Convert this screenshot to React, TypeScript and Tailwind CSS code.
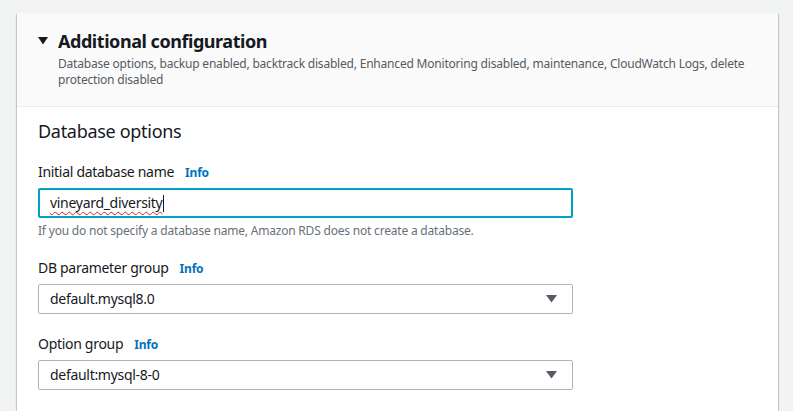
import React from "react";

const font = { fontFamily: '"Noto Sans", "Open Sans", Arial, sans-serif' };

const Caret = () => (
  <svg width="11" height="8" viewBox="0 0 11 8" className="fill-[#545b64]">
    <path d="M0 0h11L5.5 7.5z" />
  </svg>
);

const Label: React.FC<{ text: string }> = ({ text }) => (
  <div className="flex h-[20px] items-center gap-[11px] leading-[20px]">
    <span className="text-[14px] tracking-[-0.3px] text-[#16191f]">{text}</span>
    <span className="pt-[1px] text-[12px] font-bold tracking-[-0.2px] text-[#0073bb]">Info</span>
  </div>
);

const SelectBox: React.FC<{ value: string }> = ({ value }) => (
  <div className="mt-[6px] flex h-[30px] w-[535px] items-center justify-between rounded-[2px] border border-[#aab7b8] bg-white pl-[11px] pr-[15px]">
    <span className="text-[14px] leading-[20px] tracking-[-0.3px] text-[#16191f]">{value}</span>
    <Caret />
  </div>
);

export default function App() {
  return (
    <div className="min-h-[411px] overflow-hidden bg-[#f2f3f3] pt-[13px] pl-[17px]" style={font}>
      <div className="w-[761px] bg-white shadow-[0_1px_1px_0_rgba(0,28,36,0.3),1px_1px_1px_0_rgba(0,28,36,0.15),-1px_1px_1px_0_rgba(0,28,36,0.15)]">
        {/* header */}
        <div className="border-b border-[#eaeded] bg-[#fafafa] pt-[17px] pb-[18px] pl-[21px] pr-[20px]">
          <div className="flex h-[22px] items-center gap-[10px]">
            <svg width="10" height="8" viewBox="0 0 10 8" className="fill-[#16191f]">
              <path d="M0 0h10L5 7.5z" />
            </svg>
            <span className="text-[18px] leading-[22px] font-bold tracking-[-0.45px] text-[#16191f]">Additional configuration</span>
          </div>
          <p className="mt-[4px] pl-[20px] text-[12px] leading-[16px] tracking-[-0.2px] text-[#545b64]">
            Database options, backup enabled, backtrack disabled, Enhanced Monitoring disabled, maintenance, CloudWatch Logs, delete protection disabled
          </p>
        </div>

        {/* body */}
        <div className="pt-[13px] pl-[21px] pb-[30px]">
          <h2 className="text-[18px] leading-[22px] tracking-[-0.3px] text-[#16191f]">Database options</h2>

          <div className="mt-[20px]">
            <Label text="Initial database name" />
            <div className="mt-[6px] flex h-[30px] w-[535px] items-center rounded-[2px] border-2 border-[#00a1c9] bg-white pl-[10px]">
              <span className="text-[14px] leading-[20px] tracking-[-0.3px] text-[#16191f] underline decoration-wavy decoration-[#e02020] decoration-[1px] underline-offset-[3px]">
                vineyard_diversity
              </span>
              <span className="ml-[1px] h-[17px] w-px bg-[#16191f]" />
            </div>
            <p className="mt-[5px] text-[12px] leading-[16px] tracking-[-0.2px] text-[#687078]">
              If you do not specify a database name, Amazon RDS does not create a database.
            </p>
          </div>

          <div className="mt-[19px]">
            <Label text="DB parameter group" />
            <SelectBox value="default.mysql8.0" />
          </div>

          <div className="mt-[20px]">
            <Label text="Option group" />
            <SelectBox value="default:mysql-8-0" />
          </div>
        </div>
      </div>
    </div>
  );
}
